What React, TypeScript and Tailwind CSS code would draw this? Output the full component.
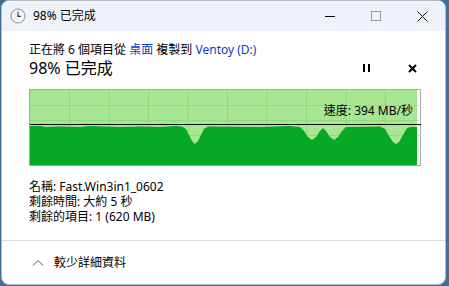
const font = { fontFamily: '"Noto Sans", "Noto Sans CJK TC", sans-serif' };

// dark green area profile: [x, y] points inside a 387x75 chart
const profile: [number, number][] = [
  [0, 36], [12, 36], [14, 37], [30, 36.5], [50, 37], [60, 36], [90, 37], [110, 36.5], [130, 37], [145, 36],
  [152, 36.5], [156, 39], [159, 45], [162, 51], [165, 54], [168, 51], [171, 45], [174, 39], [178, 36.5], [230, 37], [260, 36],
  [270, 37], [274, 41], [278, 47], [282, 50], [286, 47], [290, 41], [293, 38], [296, 41], [300, 47], [304, 50], [308, 47], [312, 41], [316, 37],
  [350, 36.5], [355, 39], [359, 46], [363, 52], [366, 54], [369, 52], [373, 45], [377, 38], [381, 37], [387, 37],
];

function Graph() {
  const w = 387;
  const h = 75;
  const pts = profile.map(([x, y]) => `${x},${y}`).join(" ");
  return (
    <div className="mt-[11px] mr-[24px] border border-[#a8a8a8] h-[77px] bg-white">
      <svg width="391" height="75" className="block">
        <rect x="0" y="0" width={w} height={h} fill="#a9e694" />
        {[1, 2, 3, 4, 5, 6, 7, 8, 9].map((i) => (
          <line key={i} x1={i * 39.5} y1="0" x2={i * 39.5} y2={h} stroke="#8fdb7c" strokeWidth="1" />
        ))}
        {[1, 2, 3, 4].map((i) => (
          <line key={i} x1="0" y1={i * 15 + 0.5} x2={w} y2={i * 15 + 0.5} stroke="#8fdb7c" strokeWidth="1" />
        ))}
        <polygon points={`0,${h} ${pts} ${w},${h}`} fill="#06a925" />
        {[1, 2, 3, 4].map((i) => (
          <line key={i} x1={w} y1={i * 15 + 0.5} x2={w + 4} y2={i * 15 + 0.5} stroke="#c8e8c0" strokeWidth="1" />
        ))}
        <line x1="0" y1="34.5" x2="391" y2="34.5" stroke="#000" strokeWidth="1.2" />
      </svg>
      <div className="relative -mt-[75px] h-0">
        <span className="absolute right-[7px] top-[13px] text-[12px] leading-[16px] text-black">速度: 394 MB/秒</span>
      </div>
    </div>
  );
}

export default function App() {
  return (
    <div className="w-[449px] h-[286px] bg-[#3f6d9c] flex" style={font}>
      <div className="ml-[1px] w-[445px] h-[285px] rounded-[8px] overflow-hidden bg-white flex flex-col border border-[#b6bcc4]">
        {/* title bar */}
        <div className="h-[30px] bg-[#eff3f9] flex items-center shrink-0">
          <svg width="16" height="16" viewBox="0 0 16 16" className="ml-[8px]">
            <circle cx="8" cy="8" r="7" fill="#f4f4f4" stroke="#8c8c8c" strokeWidth="1" />
            <path d="M8 3.8V8.4H10.8" fill="none" stroke="#333" strokeWidth="1.1" />
          </svg>
          <span className="ml-[7px] text-[12px] text-black">98% 已完成</span>
          <div className="ml-auto flex items-center">
            <div className="w-[46px] h-[30px] flex items-center justify-center">
              <div className="w-[10px] h-[1px] bg-black" />
            </div>
            <div className="w-[46px] h-[30px] flex items-center justify-center">
              <div className="w-[10px] h-[10px] border border-[#9a9a9a]" />
            </div>
            <div className="w-[46px] h-[30px] flex items-center justify-center">
              <svg width="11" height="11" viewBox="0 0 11 11">
                <path d="M0.5 0.5L10.5 10.5M10.5 0.5L0.5 10.5" stroke="#111" strokeWidth="1" />
              </svg>
            </div>
          </div>
        </div>

        {/* body */}
        <div className="pl-[27px] pt-[11px] flex flex-col">
          <div className="text-[12px] leading-[16px] text-black">
            正在將 6 個項目從 <span className="text-[#0b3bc4]">桌面</span> 複製到 <span className="text-[#0b3bc4]">Ventoy (D:)</span>
          </div>
          <div className="flex items-center mr-[24px]">
            <span className="text-[16px] leading-[20px] text-black">98% 已完成</span>
            <div className="ml-auto flex items-center gap-[38px] mr-[4px]">
              <div className="flex gap-[3px]">
                <div className="w-[2px] h-[8px] bg-black" />
                <div className="w-[2px] h-[8px] bg-black" />
              </div>
              <svg width="9" height="9" viewBox="0 0 9 9">
                <path d="M1 1L8 8M8 1L1 8" stroke="#000" strokeWidth="2" />
              </svg>
            </div>
          </div>
          <Graph />
          <div className="mt-[13px] text-[12px] leading-[15px] text-black">
            <div>名稱: Fast.Win3in1_0602</div>
            <div>剩餘時間: 大約 5 秒</div>
            <div>剩餘的項目: 1 (620 MB)</div>
          </div>
        </div>

        {/* footer */}
        <div className="mt-auto border-t border-[#dcdcdc] h-[44px] flex items-center shrink-0">
          <svg width="12" height="8" viewBox="0 0 12 8" className="ml-[30px]">
            <path d="M1 6.5L6 1.5L11 6.5" fill="none" stroke="#555" strokeWidth="1" />
          </svg>
          <span className="ml-[10px] text-[12px] text-black">較少詳細資料</span>
        </div>
      </div>
    </div>
  );
}
